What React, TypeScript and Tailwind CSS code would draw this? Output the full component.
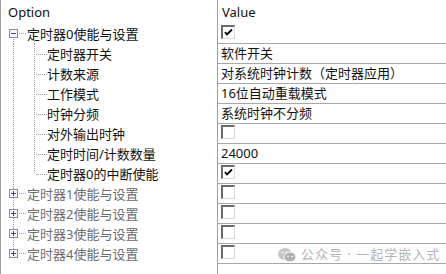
import React from "react";

type Row =
  | { kind: "root"; label: string; value: { check: boolean } }
  | { kind: "child"; label: string; value: { check?: boolean; text?: string }; last?: boolean }
  | { kind: "closed"; label: string; last?: boolean };

const rows: Row[] = [
  { kind: "root", label: "定时器0使能与设置", value: { check: true } },
  { kind: "child", label: "定时器开关", value: { text: "软件开关" } },
  { kind: "child", label: "计数来源", value: { text: "对系统时钟计数（定时器应用）" } },
  { kind: "child", label: "工作模式", value: { text: "16位自动重载模式" } },
  { kind: "child", label: "时钟分频", value: { text: "系统时钟不分频" } },
  { kind: "child", label: "对外输出时钟", value: { check: false } },
  { kind: "child", label: "定时时间/计数数量", value: { text: "24000" } },
  { kind: "child", label: "定时器0的中断使能", value: { check: true }, last: true },
  { kind: "closed", label: "定时器1使能与设置" },
  { kind: "closed", label: "定时器2使能与设置" },
  { kind: "closed", label: "定时器3使能与设置" },
  { kind: "closed", label: "定时器4使能与设置", last: true },
];

const dot = { stroke: "#a0a0a0", strokeWidth: 1, strokeDasharray: "1 1", shapeRendering: "crispEdges" as const };

function ExpandBox({ open }: { open: boolean }) {
  return (
    <g shapeRendering="crispEdges">
      <rect x="8.5" y="5.5" width="8" height="8" fill="#f4f4f4" stroke="#8f8f8f" />
      <line x1="10" y1="9.5" x2="15" y2="9.5" stroke="#2d4f8a" />
      {!open && <line x1="12.5" y1="7" x2="12.5" y2="12" stroke="#2d4f8a" />}
    </g>
  );
}

function Gutter({ row }: { row: Row }) {
  const w = row.kind === "child" ? 46 : 26;
  return (
    <svg width={w} height="20" className="shrink-0">
      {row.kind === "root" && (
        <>
          <line x1="18" y1="9.5" x2="26" y2="9.5" {...dot} />
          <line x1="12.5" y1="15" x2="12.5" y2="20" {...dot} />
        </>
      )}
      {row.kind === "child" && (
        <>
          <line x1="12.5" y1="0" x2="12.5" y2="20" {...dot} />
          <line x1="33.5" y1="0" x2="33.5" y2={row.last ? 10 : 20} {...dot} />
          <line x1="35" y1="10.5" x2="46" y2="10.5" {...dot} />
        </>
      )}
      {row.kind === "closed" && (
        <>
          <line x1="12.5" y1="0" x2="12.5" y2="5" {...dot} />
          {!row.last && <line x1="12.5" y1="14" x2="12.5" y2="20" {...dot} />}
          <line x1="18" y1="9.5" x2="26" y2="9.5" {...dot} />
        </>
      )}
      {row.kind !== "child" && <ExpandBox open={row.kind === "root"} />}
    </svg>
  );
}

function CheckBox({ checked }: { checked: boolean }) {
  return (
    <div className="w-[14px] h-[14px] bg-white border-t-2 border-l-2 border-t-[#6b6b6b] border-l-[#6b6b6b] border-b border-r border-b-[#dcdcdc] border-r-[#dcdcdc]">
      {checked && (
        <svg width="12" height="12" viewBox="0 0 12 12" className="block">
          <path d="M2 5 L4 7.5 L9 2.5" fill="none" stroke="#000" strokeWidth="1.8" />
        </svg>
      )}
    </div>
  );
}

export default function App() {
  return (
    <div
      className="w-[446px] h-[274px] bg-white overflow-hidden relative flex border-l border-[#a0a0a0] text-[13px] text-[#111]"
      style={{ fontFamily: '"Noto Sans", "Noto Sans CJK SC", sans-serif' }}
    >
      {/* Option column */}
      <div className="w-[216px] shrink-0 flex flex-col">
        <div className="h-6 flex items-center pl-[7px] leading-none">Option</div>
        {rows.map((r, i) => (
          <div key={i} className="h-5 flex items-center relative">
            <Gutter row={r} />
            {r.kind === "root" && (
              <span className="absolute left-[33px] top-[16px] h-[4px] border-l border-dotted border-[#a0a0a0]" />
            )}
            <span className={`whitespace-nowrap leading-none ${r.kind === "closed" ? "text-[#6d6d6d]" : ""}`}>
              {r.label}
            </span>
          </div>
        ))}
      </div>

      {/* Value column */}
      <div className="flex-1 flex flex-col border-l border-[#a0a0a0]">
        <div className="h-6 flex items-center pl-1 leading-none">Value</div>
        {rows.map((r, i) => {
          const v = r.kind === "closed" ? { check: false } : r.value;
          return (
            <div key={i} className="h-5 border-b border-[#a8a8a8] pl-[3px] flex">
              {v.text !== undefined ? (
                <span className="self-center whitespace-nowrap leading-none">{v.text}</span>
              ) : (
                <div className="pt-[1px]">
                  <CheckBox checked={!!v.check} />
                </div>
              )}
            </div>
          );
        })}
      </div>

      {/* watermark */}
      <div className="absolute left-[276px] top-[245px] flex items-center gap-1 text-[13px] text-[#b4b4b4] pointer-events-none">
        <svg width="20" height="16" viewBox="0 0 20 16">
          <ellipse cx="8" cy="7" rx="7" ry="6" fill="#c4c4c4" />
          <ellipse cx="13" cy="10" rx="6" ry="5" fill="#b0b0b0" stroke="#fff" strokeWidth="1" />
          <circle cx="5.5" cy="5.5" r="0.9" fill="#fff" />
          <circle cx="9.5" cy="5.5" r="0.9" fill="#fff" />
          <circle cx="11" cy="9.5" r="0.8" fill="#fff" />
          <circle cx="15" cy="9.5" r="0.8" fill="#fff" />
        </svg>
        <span className="whitespace-nowrap tracking-[1px]">公众号 · 一起学嵌入式</span>
      </div>
    </div>
  );
}
